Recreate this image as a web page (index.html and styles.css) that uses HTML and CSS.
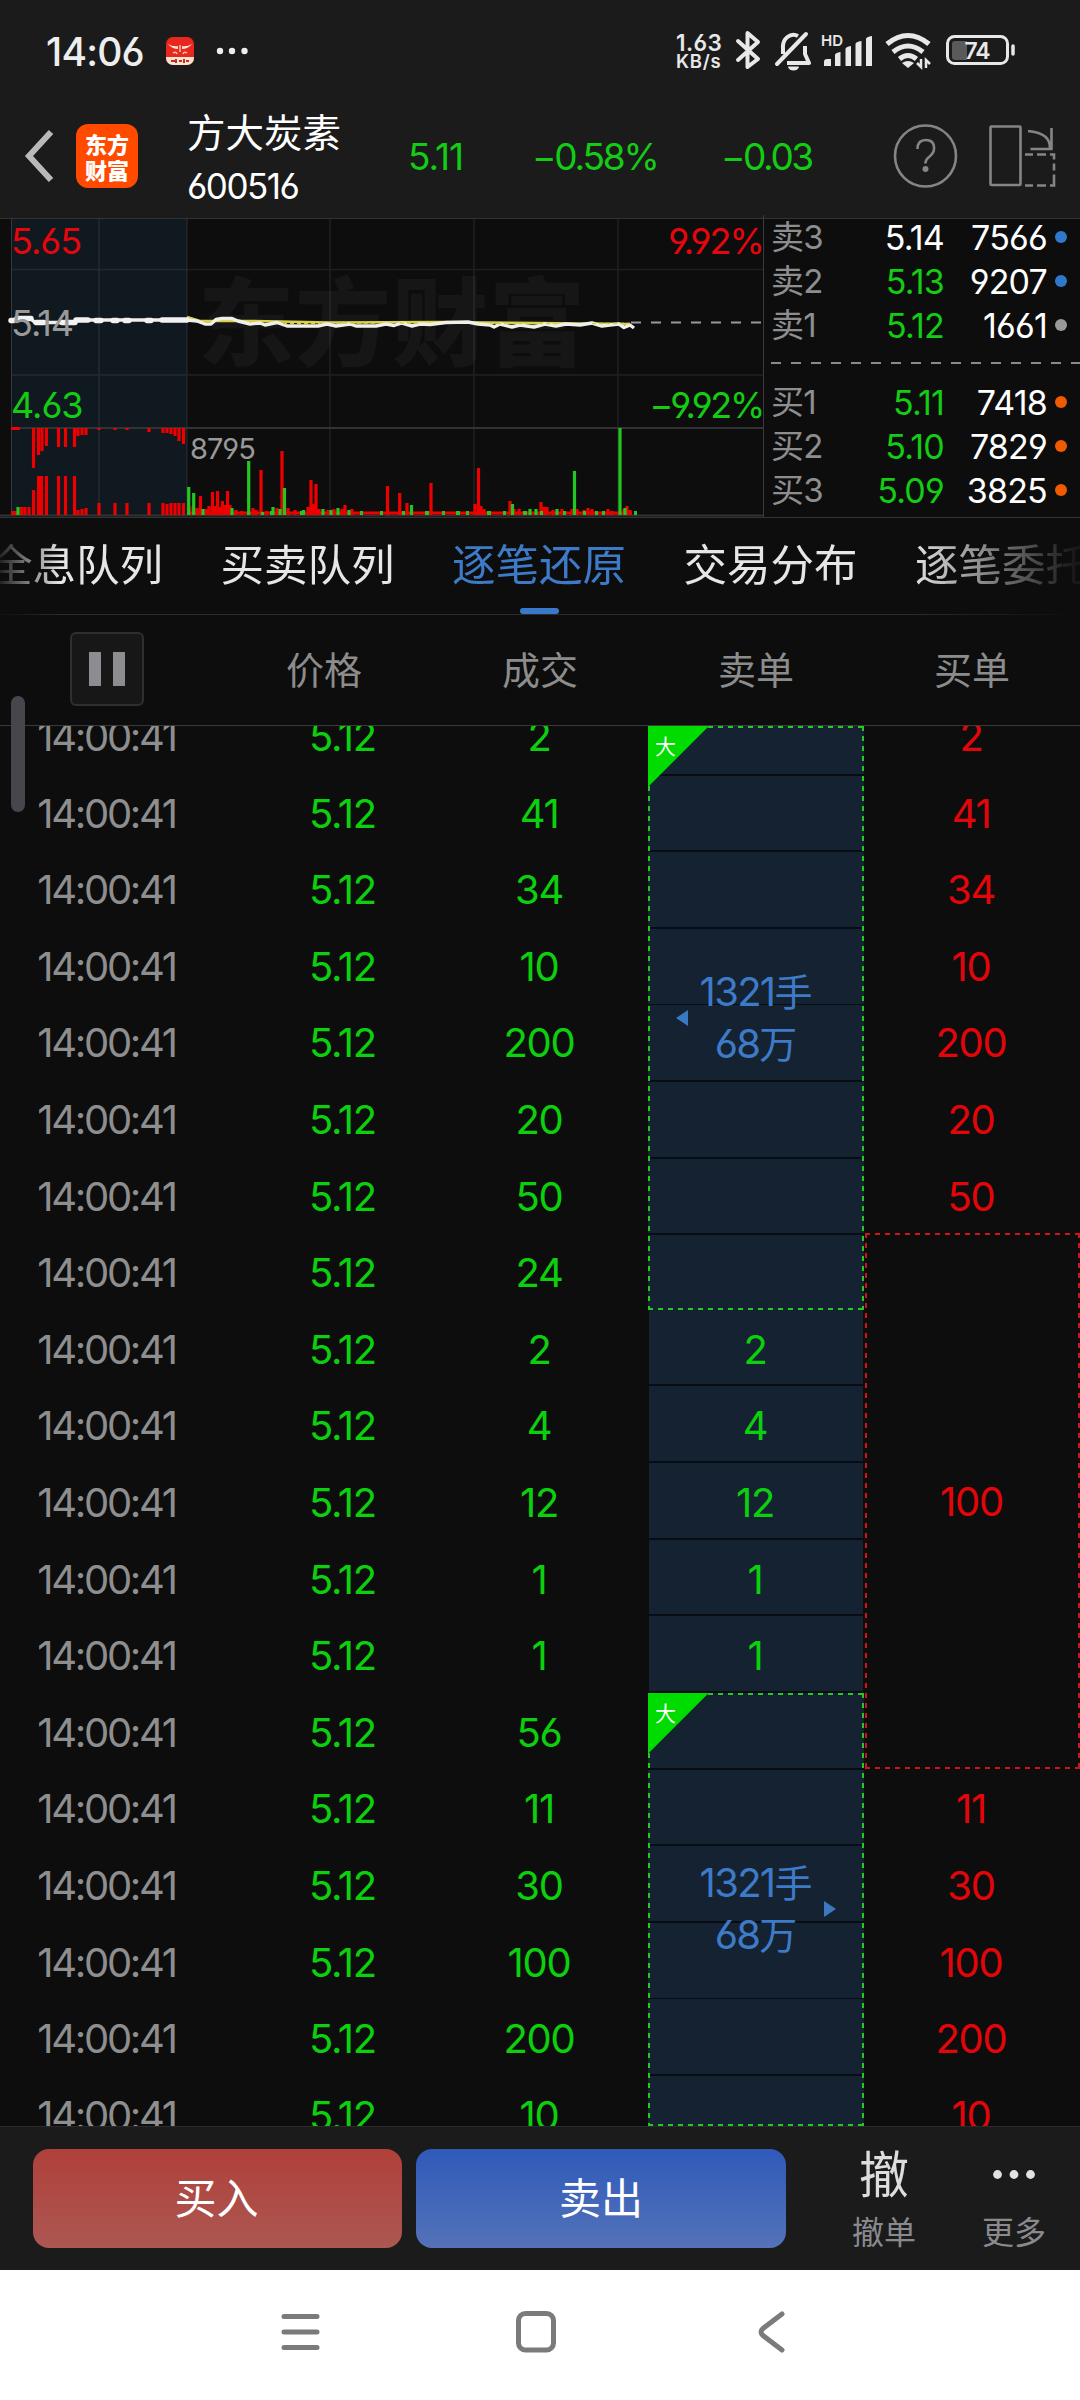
FILE: index.html
```html
<!DOCTYPE html>
<html lang="zh-CN">
<head>
<meta charset="utf-8">
<title>方大炭素 600516</title>
<link rel="stylesheet" href="styles.css">
</head>
<body>
<div class="screen">
  <div class="status">
    <span class="clock">14:06</span>
    <svg class="s-app" width="28" height="28" viewBox="0 0 28 28"><rect width="28" height="28" rx="7" fill="#e8281e"/><path d="M0 20H28V21a7 7 0 0 1-7 7H7a7 7 0 0 1-7-7Z" fill="#fbe3cf"/><path d="M2 7q5 3 10 2v3q-6 0-10-5ZM26 7q-5 3-10 2v3q6 0 10-5Z" fill="#fbe3cf"/><path d="M14 8v7M7 16q3-2 4 1M21 16q-3-2-4 1" stroke="#f7b9a0" stroke-width="1.600" fill="none"/><path d="M5 24h4M10 22v4M13 24h3M18 22v4M20 24h3" stroke="#b8302a" stroke-width="2"/></svg>
    <svg class="s-dots" width="32" height="8" viewBox="0 0 32 8"><g fill="#eee"><circle cx="4" cy="4" r="3.200"/><circle cx="16" cy="4" r="3.200"/><circle cx="28.500" cy="4" r="3.200"/></g></svg>
    <span class="speed"><b>1.63</b><i>KB/s</i></span>
    <svg class="s-icons" width="346" height="40" viewBox="732 32 346 40" fill="none" stroke="#e8e8e8" stroke-width="4">
      <path d="M737 42 757 60 746.500 68V34L757 43 737 61" stroke-linejoin="round" stroke-linecap="round"/>
      <path d="M776 65 805 35" stroke-linecap="round"/><path d="M782 55V49a10.500 12 0 0 1 15-12M804 47v8l4 9H786" stroke-linejoin="round"/><path d="M787 67.500h11a5.500 4 0 0 1-11 0Z" fill="#e8e8e8" stroke="none"/>
      <path d="M823 67v-4q0-3 3-3h4v7ZM834 67V56q0-2 5.500-3v14ZM844.500 67V50q0-2 5.500-3v20ZM854.500 67V45q0-2 6-3v25ZM865 67V40q0-2 6-3v30Z" fill="#e8e8e8" stroke="none"/>
      <path d="M886 45q21-17 42 0M892 53q15-12 30 0M898.500 60q8.500-7 17 0" stroke-width="5"/><path d="M901 64q6-4 12 0l-6 5Z" fill="#e8e8e8" stroke="none"/><path d="M920 60v8l-4-4M925 69v-8l4 4" stroke-width="2.500"/>
      <rect x="946.500" y="37.500" width="60" height="27" rx="7" stroke-width="3"/><path d="M951 45q0-3 3-3h12v19h-12q-3 0-3-3Z" fill="#5a5a5a" stroke="none"/><path d="M1012 47v8" stroke-linecap="round" stroke-width="3.500"/>
      <text class="hd" x="820" y="47">HD</text><text class="batt" x="976" y="60">74</text>
    </svg>
  </div>
  <div class="header">
    <svg class="back" width="32" height="56" viewBox="0 0 32 56"><path d="M28 4 6 28 28 52" fill="none" stroke="#b9b9b9" stroke-width="6"/></svg>
    <div class="logo">东方<br>财富</div>
    <div class="stock"><div class="name">方大炭素</div><div class="code">600516</div></div>
    <div class="q q1">5.11</div><div class="q q2">−0.58%</div><div class="q q3">−0.03</div>
    <svg class="tools" width="166" height="68" viewBox="892 122 166 68" fill="none" stroke="#858585" stroke-width="2.600">
      <circle cx="926.500" cy="156" r="30.500"/><path d="M918.500 149q0-9 8.300-9t8.300 8q0 5-4.500 8.500t-4 7"/><circle cx="926.500" cy="169" r="3" fill="#858585" stroke="none"/>
      <rect x="991.500" y="126.500" width="30" height="58.500" rx="1"/><path d="M1029 131q23 2 22 18M1052.500 128v21h-21"/><path d="M1026 154.500h8m4 0h9m4 0h4v5m0 4v7m0 4v11h-4m-4 0h-9m-4 0h-8"/>
    </svg>
  </div>
  <div class="market">
    <svg class="chart" width="763" height="299" viewBox="0 0 763 299">
      <rect x="11" y="1" width="176" height="296" fill="#101820"/>
      <text class="wm" x="198" y="140" textLength="387">东方财富</text>
      <path d="M99 1V297M187 1V297M330 1V297M474 1V297M618 1V297M11 51.500H763M11 157H763" stroke="#fff" stroke-opacity=".08" stroke-width="1.500"/>
      <path d="M11.500 1V297" stroke="#34383c"/><path d="M11 210H763" stroke="#333" stroke-width="2"/><path d="M0 297.500H763" stroke="#333" stroke-width="2"/>
      <path d="M631 104.500H763" stroke="#999" stroke-width="1.800" stroke-dasharray="10 10"/>
      <path d="M187 99 200 103H250L330 104.500 440 104 630 106" stroke="#d8cf4a" stroke-width="2.500" fill="none"/>
      <path d="M11 102.500H17L23 100 31 101 35 104.500H73L79 102H187L197 103 205 106H211L216 101.500 222 100.500H232L238 103 250 106 260 105 265 107 277 104.500 287 108H318L327 106 336 108 350 106 356 108H376L386 106 394 107.500 402 105 412 108 420 106 430 106.500 446 104.500 468 104 478 106 490 107 494 109 500 106 512 109 520 107 534 109 545 106 556 108 566 106 580 107 592 105 602 108 610 107 619 106 624 109.500 630 107 634 110" stroke="#f0f0ea" stroke-width="3.400" fill="none" stroke-linejoin="round"/>
      <path d="M11 102.500h3M17 100.500h14M36 104.500h8M62 104.500h13M76 102h12M96 102.500h5M113 102.500h4M125 102.500h4M147 102.500h4M162 102h25" stroke="#f2f2f2" stroke-width="5.400" stroke-linecap="round"/>
      <path d="M283 105.500H320M336 105H376M400 105H420M490 105.500H556M592 105.500H630" stroke="#d8cf4a" stroke-width="1.500" stroke-dasharray="4 3"/>
      <g fill="none" stroke="#ee0000" stroke-width="3.200">
        <path d="M33.500 210V250M38.500 210V237M42 210V233M46.500 210V228M58.500 210V229M65.500 210V229M74.500 210V229M78 210V218M82 210V217M86 210V217M99 210V212M115 210V212M127 210V212M149 210V214M163 210V215M167 210V215M171 210V216M175 210V218M179 210V223M183.500 210V226M11 210.500H20"/>
        <path d="M12.500 297V293M15.500 297V293M21.500 297V289M25 297V289M29 297V289M33.500 297V272M38.500 297V258M41.500 297V258M46.500 297V258M58.500 297V258M65.500 297V258M74.500 297V258M78 297V292M82 297V291M86 297V290M99 297V285M115 297V285M127 297V285M149 297V285M163 297V285M167 297V286M171 297V285M175 297V285M179 297V285M183.500 297V285"/>
        <path d="M189 297V290M193 297V288M197 297V290M200.500 297V278M206 297V291M209 297V288M212.500 297V274M215 297V288M217.500 297V273M220 297V289M222.500 297V283M225 297V287M227.500 297V273M230 297V287M236 297V292M242 297V293M253 297V290M256 297V292M261 297V252M267 297V293M277 297V290M282 297V233M288 297V290M295 297V292M308 297V289M311 297V262M313 297V286M316 297V266M319 297V291M328 297V292M334 297V291M342 297V291M345 297V287M352 297V291M387.500 297V268M399.700 297V275M407 297V285M431 297V265M475 297V286M478.500 297V250M481 297V288M484 297V291M510 297V283M514 297V291M519 297V291M541 297V284M544 297V289M547 297V289M553 297V292M562 297V291M572 297V291M577 297V291M584 297V292M588 297V290M592 297V291M608 297V291M612 297V293M624 297V291M627 297V288M630 297V292"/>
        <path d="M187 295H632"/>
      </g>
      <path d="M18 297V289M188.700 297V269M193.700 297V275M203 297V291M232 297V290M248.700 297V243M262.500 297V294M273 297V289M280 297V291M284.500 297V270M303.500 297V292M323 297V291M331 297V292M338 297V290M349 297V292M411.500 297V287M512.500 297V286M530 297V291M536 297V291M557 297V291M574.500 297V253M620 297V210M625 297V290" stroke="#22c722" stroke-width="3.200"/>
      <path d="M247 295h3M270 295h4M300 295h3M360 295h3M380 295h3M402 295h3M425 295h4M442 295h3M456 295h4M466 295h3M487 295h4M503 295h3M523 295h4M540 295h3M563 295h3M583 295h3M595 295h3M602 295h3M634 295h3" stroke="#22c722" stroke-width="4"/>
      <g class="lab"><text class="r" x="11" y="35.500">5.65</text><text class="n" x="11" y="117.500">5.14</text><text class="g" x="11" y="199.500">4.63</text><text class="r e" x="763" y="35.500">9.92%</text><text class="g e e2" x="763" y="199.500">−9.92%</text><text class="n v" x="190" y="240.500">8795</text></g>
    </svg>
    <div class="book">
      <div class="lv"><span>卖3</span><em class="w">5.14</em><b>7566</b><i class="blue"></i></div>
      <div class="lv"><span>卖2</span><em>5.13</em><b>9207</b><i class="blue"></i></div>
      <div class="lv"><span>卖1</span><em>5.12</em><b>1661</b><i class="gray"></i></div>
      <div class="cut"></div>
      <div class="lv"><span>买1</span><em>5.11</em><b>7418</b><i></i></div>
      <div class="lv"><span>买2</span><em>5.10</em><b>7829</b><i></i></div>
      <div class="lv"><span>买3</span><em>5.09</em><b>3825</b><i></i></div>
    </div>
  </div>
  <div class="tabs"><span>全息队列</span><span>买卖队列</span><span class="on">逐笔还原</span><span>交易分布</span><span>逐笔委托</span></div>
  <div class="cols">
    <div class="col-h"><div class="pause"><i></i><i></i></div></div>
    <div class="col-h">价格</div><div class="col-h">成交</div><div class="col-h">卖单</div><div class="col-h">买单</div>
    <div class="thumb"></div>
  </div>
  <div class="list">
    <div class="col time"><p>14:00:41</p><p>14:00:41</p><p>14:00:41</p><p>14:00:41</p><p>14:00:41</p><p>14:00:41</p><p>14:00:41</p><p>14:00:41</p><p>14:00:41</p><p>14:00:41</p><p>14:00:41</p><p>14:00:41</p><p>14:00:41</p><p>14:00:41</p><p>14:00:41</p><p>14:00:41</p><p>14:00:41</p><p>14:00:41</p><p>14:00:41</p></div>
    <div class="col price"><p>5.12</p><p>5.12</p><p>5.12</p><p>5.12</p><p>5.12</p><p>5.12</p><p>5.12</p><p>5.12</p><p>5.12</p><p>5.12</p><p>5.12</p><p>5.12</p><p>5.12</p><p>5.12</p><p>5.12</p><p>5.12</p><p>5.12</p><p>5.12</p><p>5.12</p></div>
    <div class="col vol"><p>2</p><p>41</p><p>34</p><p>10</p><p>200</p><p>20</p><p>50</p><p>24</p><p>2</p><p>4</p><p>12</p><p>1</p><p>1</p><p>56</p><p>11</p><p>30</p><p>100</p><p>200</p><p>10</p></div>
    <div class="col sell">
      <div class="big first"><span class="tag">大</span><svg class="arrow left" width="12" height="16" viewBox="0 0 12 16"><path d="M12 0V16L0 8Z" fill="#3a78c4"/></svg><div>1321<u>手</u><br>68<u>万</u></div></div>
      <p>2</p><p>4</p><p>12</p><p>1</p><p>1</p>
      <div class="big second"><span class="tag">大</span><svg class="arrow right" width="12" height="16" viewBox="0 0 12 16"><path d="M0 0V16L12 8Z" fill="#3a78c4"/></svg><div>1321<u>手</u><br>68<u>万</u></div></div>
    </div>
    <div class="col buy"><p>2</p><p>41</p><p>34</p><p>10</p><p>200</p><p>20</p><p>50</p><div class="merged">100</div><p>11</p><p>30</p><p>100</p><p>200</p><p>10</p></div>
  </div>
  <div class="actions">
    <div class="btn b">买入</div><div class="btn s">卖出</div>
    <div class="act a1"><strong>撤</strong><span>撤单</span></div>
    <div class="act a2"><svg width="44" height="50" viewBox="0 0 44 50"><g fill="#e2e2e2"><circle cx="5.500" cy="25.500" r="4.400"/><circle cx="22" cy="25.500" r="4.400"/><circle cx="38.500" cy="25.500" r="4.400"/></g></svg><span>更多</span></div>
  </div>
  <div class="nav">
    <svg width="1080" height="130" viewBox="0 2270 1080 130" fill="none" stroke="#7b7b7b" stroke-width="5" stroke-linecap="round" stroke-linejoin="round"><path d="M284 2316.500H317M284 2332H317M284 2347.500H317"/><rect x="518.500" y="2313.500" width="35" height="36.500" rx="7"/><path d="M782 2314 763 2328.500Q759 2332 763 2335.500L782 2350"/></svg>
  </div>
</div>
</body>
</html>
```
FILE: styles.css
```css
* { box-sizing: border-box; }
body { margin: 0; background: #0d0d0d; }
p { margin: 0; }
i, em { font-style: normal; }
.screen {
  width: 1080px; height: 2400px; overflow: hidden;
  display: flex; flex-direction: column;
  font-family: Inter, "Noto Sans CJK SC", sans-serif;
  font-feature-settings: "cv03", "cv04";
  font-weight: 400; color: #e6e6e6; background: #0d0d0d;
}

/* status bar */
.status { height: 102px; flex: none; background: #1b1b1b; display: flex; align-items: center; padding-left: 46px; }
.clock { width: 120px; font-size: 39px; font-weight: 500; letter-spacing: -0.8px; color: #eee; }
.s-dots { margin-left: 22px; }
.speed { margin-left: 428px; width: 57px; display: flex; flex-direction: column; font-weight: 600; color: #e8e8e8; }
.speed b { font-weight: 600; font-size: 22.5px; line-height: 20px; letter-spacing: 0.4px; }
.speed i { font-size: 18.5px; line-height: 17px; letter-spacing: 0.8px; }
.hd { font-size: 15px; font-weight: 600; fill: #e8e8e8; stroke: none; }
.batt { font-size: 23px; font-weight: 600; fill: #e8e8e8; stroke: none; text-anchor: middle; letter-spacing: -1px; }

/* title bar */
.header { height: 116px; flex: none; background: #1b1b1b; display: flex; align-items: center; padding: 0 22px 8px 23px; }
.back { flex: none; }
.logo { width: 62px; height: 64px; margin-left: 21px; border-radius: 12px; background: #ff4a00; color: #fff; font: 900 22px/26px "Noto Sans CJK SC", sans-serif; text-align: center; padding-top: 6px; flex: none; }
.stock { margin-left: 49px; width: 221px; flex: none; color: #fff; padding-top: 7px; }
.name { font-size: 38.5px; line-height: 53px; }
.code { font-size: 35px; line-height: 52px; letter-spacing: -1.5px; }
.q { font-size: 37px; color: #14cc14; letter-spacing: -1px; flex: none; }
.q1 { width: 124px; }
.q2 { width: 189px; letter-spacing: -2.2px; }
.q3 { width: 170px; letter-spacing: -2.4px; }
.tools { flex: none; }

/* chart and order book */
.market { height: 300px; flex: none; display: flex; border-top: 1px solid #333; border-bottom: 1px solid #333; }
.chart { flex: none; margin-top: -1px; }
.wm { font: 900 96px "Noto Sans CJK SC", sans-serif; fill: #161616; }
.lab text { font-size: 36px; letter-spacing: -1px; }
.lab .r { fill: #e6060c; }
.lab .g { fill: #14cc14; }
.lab .n { fill: #999; }
.lab .e { text-anchor: end; letter-spacing: -1.9px; }
.lab .e2 { letter-spacing: -2.3px; }
.lab .v { font-size: 29px; }
.book { flex: 1; border-left: 1px solid #3a3a3a; display: flex; flex-direction: column; margin-top: -4px; padding-left: 7px; }
.lv { height: 44px; display: flex; align-items: center; font-size: 34px; letter-spacing: -0.8px; }
.lv span { width: 73px; color: #8e8e8e; font-size: 33px; line-height: 44px; }
.lv em { width: 100px; text-align: right; color: #14cc14; }
.lv .w { color: #fff; }
.lv b { width: 103px; text-align: right; font-weight: 400; color: #fff; }
.lv i { width: 12px; height: 12px; margin-left: 8px; border-radius: 50%; background: #f05a00; }
.lv .blue { background: #2f78cc; }
.lv .gray { background: #999; }
.cut { height: 2px; margin: 15px 0 16px; background: repeating-linear-gradient(90deg, #8a8a8a 0 10px, transparent 10px 20px); }

/* tabs */
.tabs { height: 97px; flex: none; border-bottom: 1px solid #2c2c2c; display: flex; gap: 57.5px; overflow: hidden; font-size: 43.5px; line-height: 94px; white-space: nowrap; -webkit-mask-image: linear-gradient(90deg, rgba(0,0,0,.1), #000 60px, #000 910px, rgba(0,0,0,.05) 1075px); }
.tabs span { flex: none; position: relative; width: 174px; }
.tabs span:first-child { margin-left: -11px; }
.tabs .on { color: #3d7bc8; }
.tabs .on::after { content: ""; position: absolute; left: 68px; bottom: 0; width: 39px; height: 6px; border-radius: 3px; background: #3a78c8; }

/* column titles */
.cols { height: 111px; flex: none; display: grid; grid-template-columns: repeat(5, 216px); align-items: center; border-bottom: 1px solid #3a3a3a; position: relative; }
.col-h { text-align: center; font-size: 38px; line-height: 50px; color: #8c8c8c; }
.pause { width: 74px; height: 74px; margin: -2px 0 0 70px; border: 2px solid #2f2f31; border-radius: 6px; background: #171718; display: flex; justify-content: center; align-items: center; gap: 12px; }
.pause i { width: 12px; height: 34px; background: #8d8d91; }
.thumb { position: absolute; left: 11px; top: 81px; width: 14px; height: 116px; border-radius: 7px; background: #46464c; z-index: 2; }

/* tick list */
.list { height: 1400px; flex: none; overflow: hidden; display: grid; grid-template-columns: repeat(5, 216px); font-size: 40px; letter-spacing: -1.3px; color: #0cd00e; text-align: center; }
.col { margin-top: -28.9px; padding-right: 2px; }
.col p { height: 76.6px; line-height: 79px; }
.time { color: #8e8e8e; letter-spacing: -2.3px; padding-right: 3px; }
.price { padding-left: 39px; }
.buy { color: #e2060a; padding-right: 0; }
.sell { margin-top: 0; padding: 0 0 0 1px; }
.sell p { background: linear-gradient(to top, #080d14 1.6px, #152231 1.6px); margin-right: 1px; padding-right: 2px; }
.big {
  --d: #24c924;
  position: relative; display: flex; align-items: center; justify-content: center;
  margin-left: -1px; color: #3d7bc8; font-size: 40px; line-height: 51px; letter-spacing: -1.7px;
}
.big div { position: relative; }
.big u { text-decoration: none; font-size: 38px; letter-spacing: 0; }
.first { height: 583.9px; background:
  repeating-linear-gradient(90deg, var(--d) 0 5px, transparent 5px 10px) top / 100% 2px no-repeat,
  repeating-linear-gradient(90deg, var(--d) 0 5px, transparent 5px 10px) bottom / 100% 2px no-repeat,
  repeating-linear-gradient(var(--d) 0 5px, transparent 5px 10px) left / 2px 100% no-repeat,
  repeating-linear-gradient(var(--d) 0 5px, transparent 5px 10px) right / 2px 100% no-repeat,
  repeating-linear-gradient(to top, #152231 0 74.8px, #080d14 74.8px 76.6px); }
.second { height: 433.1px; background:
  repeating-linear-gradient(90deg, var(--d) 0 5px, transparent 5px 10px) top / 100% 2px no-repeat,
  repeating-linear-gradient(90deg, var(--d) 0 5px, transparent 5px 10px) bottom / 100% 2px no-repeat,
  repeating-linear-gradient(var(--d) 0 5px, transparent 5px 10px) left / 2px 100% no-repeat,
  repeating-linear-gradient(var(--d) 0 5px, transparent 5px 10px) right / 2px 100% no-repeat,
  repeating-linear-gradient(#152231 0 74.8px, #080d14 74.8px 76.6px); }
.tag { position: absolute; left: 0; top: 0; width: 61px; height: 61px; background: #00dc00; clip-path: polygon(0 0, 100% 0, 0 100%); color: #fff; font-size: 21px; line-height: 42px; text-align: left; padding-left: 7px; }
.arrow { position: absolute; top: 50%; margin-top: -8px; }
.left { left: 28px; }
.right { right: 28px; }
.merged { --d: #d4121a; height: 536.2px; line-height: 538px; margin-left: 1px; padding-right: 2px; background:
  repeating-linear-gradient(90deg, var(--d) 0 5px, transparent 5px 10px) top / 100% 2px no-repeat,
  repeating-linear-gradient(90deg, var(--d) 0 5px, transparent 5px 10px) bottom / 100% 2px no-repeat,
  repeating-linear-gradient(var(--d) 0 5px, transparent 5px 10px) left / 2px 100% no-repeat,
  repeating-linear-gradient(var(--d) 0 5px, transparent 5px 10px) right / 2px 100% no-repeat; }
.buy p { padding-right: 2px; }

/* bottom bar */
.actions { height: 144px; flex: none; background: #1b1b1b; border-top: 1px solid #2b2b2b; display: flex; padding: 22px 0 0 33px; }
.btn { width: 369px; height: 99px; border-radius: 16px; font-size: 42px; line-height: 99px; text-align: center; color: #fff; }
.b { background: linear-gradient(#b0403a, #ac5752); padding-right: 2px; }
.s { margin-left: 14px; background: linear-gradient(#2f5aba, #5472b8); width: 370px; }
.act { display: flex; flex-direction: column; align-items: center; width: 64px; color: #8a8a8e; font-size: 32px; line-height: 40px; }
.act strong { font-size: 50px; font-weight: 400; line-height: 52px; height: 50px; color: #ddd; }
.act span { margin-top: 14px; white-space: nowrap; }
.a1 { margin-left: 66px; }
.a2 { margin-left: 66px; }
.nav { height: 130px; flex: none; background: #fff; }
```
